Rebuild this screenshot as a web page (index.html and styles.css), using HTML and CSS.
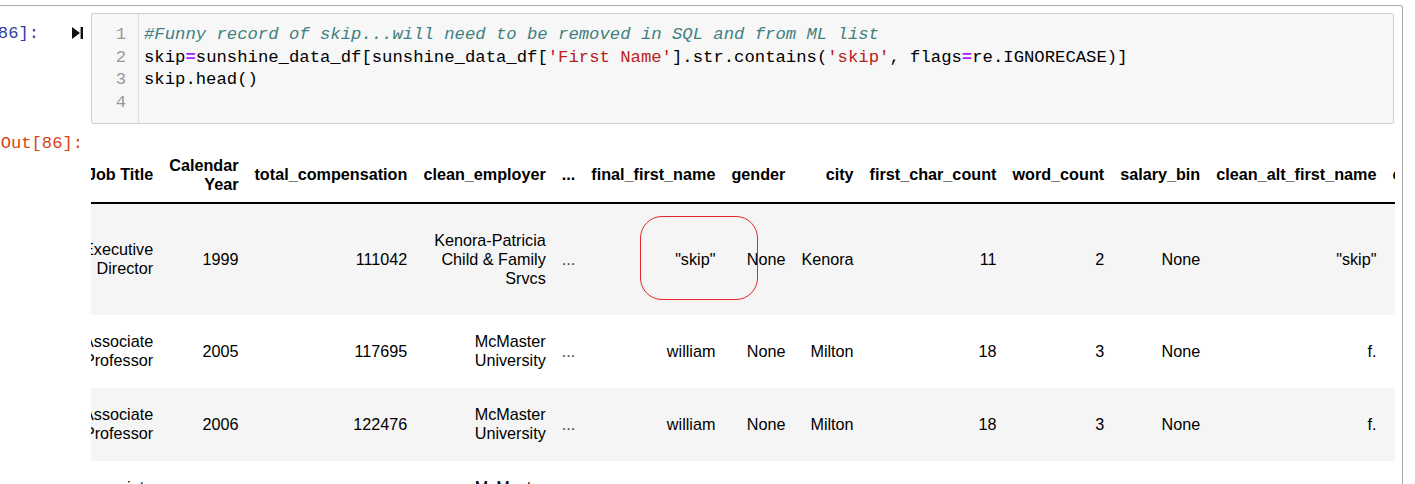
FILE: index.html
```html
<!DOCTYPE html>
<html>
<head>
<meta charset="utf-8">
<title>Notebook cell</title>
<link rel="stylesheet" href="styles.css">
</head>
<body>
<div class="cell">
  <div class="input">
    <div class="prompt prompt-in">
      <span class="prompt-text">In&nbsp;[86]:</span>
      <svg class="run-icon" width="11" height="12" viewBox="0 0 11 12"><path d="M0 0L8 6L0 12Z M8.6 0H11V12H8.6Z" fill="#111"/></svg>
    </div>
    <div class="editor">
      <div class="gutter">
        <div>1</div><div>2</div><div>3</div><div>4</div>
      </div>
      <div class="code">
        <div class="line"><span class="cm-comment">#Funny record of skip...will need to be removed in SQL and from ML list</span></div>
        <div class="line">skip<span class="cm-op">=</span>sunshine_data_df[sunshine_data_df[<span class="cm-str">'First Name'</span>].str.contains(<span class="cm-str">'skip'</span>, flags<span class="cm-op">=</span>re.IGNORECASE)]</div>
        <div class="line">skip.head()</div>
        <div class="line"> </div>
      </div>
    </div>
  </div>
  <div class="output">
    <div class="prompt prompt-out">Out[86]:</div>
    <div class="output-subarea">
      <table class="dataframe">
        <thead>
          <tr>
            <th class="job">Job Title</th>
            <th>Calendar<br>Year</th>
            <th>total_compensation</th>
            <th>clean_employer</th>
            <th>...</th>
            <th>final_first_name</th>
            <th>gender</th>
            <th>city</th>
            <th>first_char_count</th>
            <th>word_count</th>
            <th>salary_bin</th>
            <th>clean_alt_first_name</th>
            <th>clean_gender</th>
          </tr>
        </thead>
        <tbody>
          <tr class="row-tall">
            <td>Executive<br>Director</td>
            <td>1999</td>
            <td>111042</td>
            <td>Kenora-Patricia<br>Child &amp; Family<br>Srvcs</td>
            <td class="dots">...</td>
            <td>"skip"</td>
            <td>None</td>
            <td>Kenora</td>
            <td>11</td>
            <td>2</td>
            <td>None</td>
            <td>"skip"</td>
            <td>None</td>
          </tr>
          <tr class="row">
            <td>Associate<br>Professor</td>
            <td>2005</td>
            <td>117695</td>
            <td>McMaster<br>University</td>
            <td class="dots">...</td>
            <td>william</td>
            <td>None</td>
            <td>Milton</td>
            <td>18</td>
            <td>3</td>
            <td>None</td>
            <td>f.</td>
            <td>male</td>
          </tr>
          <tr class="row">
            <td>Associate<br>Professor</td>
            <td>2006</td>
            <td>122476</td>
            <td>McMaster<br>University</td>
            <td class="dots">...</td>
            <td>william</td>
            <td>None</td>
            <td>Milton</td>
            <td>18</td>
            <td>3</td>
            <td>None</td>
            <td>f.</td>
            <td>male</td>
          </tr>
          <tr class="row">
            <td>Associate<br>Professor</td>
            <td>2007</td>
            <td>125913</td>
            <td>McMaster<br>University</td>
            <td class="dots">...</td>
            <td>william</td>
            <td>None</td>
            <td>Milton</td>
            <td>18</td>
            <td>3</td>
            <td>None</td>
            <td>f.</td>
            <td>male</td>
          </tr>
        </tbody>
      </table>
      <div class="annotation"></div>
    </div>
  </div>
</div>
</body>
</html>
```

FILE: styles.css
```css
html, body {
  margin: 0;
  padding: 0;
  background: #ffffff;
  overflow: hidden;
}

body {
  padding-top: 5px;
}

.cell {
  margin-left: -10px;
  width: 1413px;
  box-sizing: border-box;
  border: 1px solid #ababab;
  border-radius: 2px;
  padding-bottom: 20px;
}

.prompt {
  flex: none;
  width: 100px;
  box-sizing: border-box;
  font-family: "Liberation Mono", "DejaVu Sans Mono", monospace;
  font-size: 17.15px;
  line-height: 22.7px;
}

.input {
  display: flex;
  padding-top: 7px;
}

.prompt-in {
  display: flex;
  justify-content: flex-end;
  align-items: flex-start;
  padding-top: 10px;
  color: #303f9f;
}

.run-icon {
  flex: none;
  margin: 4px 8px 0 33px;
}

.editor {
  flex: 1;
  min-width: 0;
  margin-right: 8px;
  display: flex;
  background: #f7f7f7;
  border: 1px solid #cfcfcf;
  border-radius: 2px;
  font-family: "Liberation Mono", "DejaVu Sans Mono", monospace;
  font-size: 17.25px;
  line-height: 22.7px;
}

.gutter {
  flex: none;
  width: 47px;
  box-sizing: border-box;
  border-right: 1px solid #dddddd;
  padding: 10px 12px 8px 0;
  text-align: right;
  color: #999999;
}

.code {
  flex: 1;
  padding: 10px 0 8px 5px;
  color: #000000;
}

.line {
  white-space: pre;
  height: 22.7px;
}

.cm-comment {
  color: #408080;
  font-style: italic;
}

.cm-str {
  color: #ba2121;
}

.cm-op {
  color: #aa22ff;
  font-weight: bold;
}

.output {
  display: flex;
  margin-top: 7px;
}

.prompt-out {
  color: #d84315;
  text-align: right;
  padding-top: 2px;
  padding-right: 8px;
}

.output-subarea {
  flex: 1;
  min-width: 0;
  margin-right: 7px;
  padding-top: 16px;
  overflow: hidden;
  position: relative;
}

.dataframe {
  border-collapse: separate;
  border-spacing: 0;
  border: none;
  margin-left: -16px;
  font-family: "Liberation Sans", Arial, sans-serif;
  font-size: 16.2px;
  color: #000000;
}

.dataframe th,
.dataframe td {
  padding: 8px;
  text-align: right;
  vertical-align: middle;
  line-height: 19px;
  white-space: nowrap;
}

.dataframe th {
  padding-top: 9px;
  font-weight: bold;
  border-bottom: 2px solid #000000;
}

.dataframe th.job {
  width: 70px;
}

.dataframe tbody tr:nth-child(odd) {
  background: #f5f5f5;
}

.row-tall {
  height: 111px;
}

.row {
  height: 73px;
}

.dots {
  color: #444444;
}

.annotation {
  position: absolute;
  left: 549px;
  top: 85px;
  width: 118px;
  height: 84px;
  box-sizing: border-box;
  border: 1px solid #e5262e;
  border-radius: 22px;
}
```
